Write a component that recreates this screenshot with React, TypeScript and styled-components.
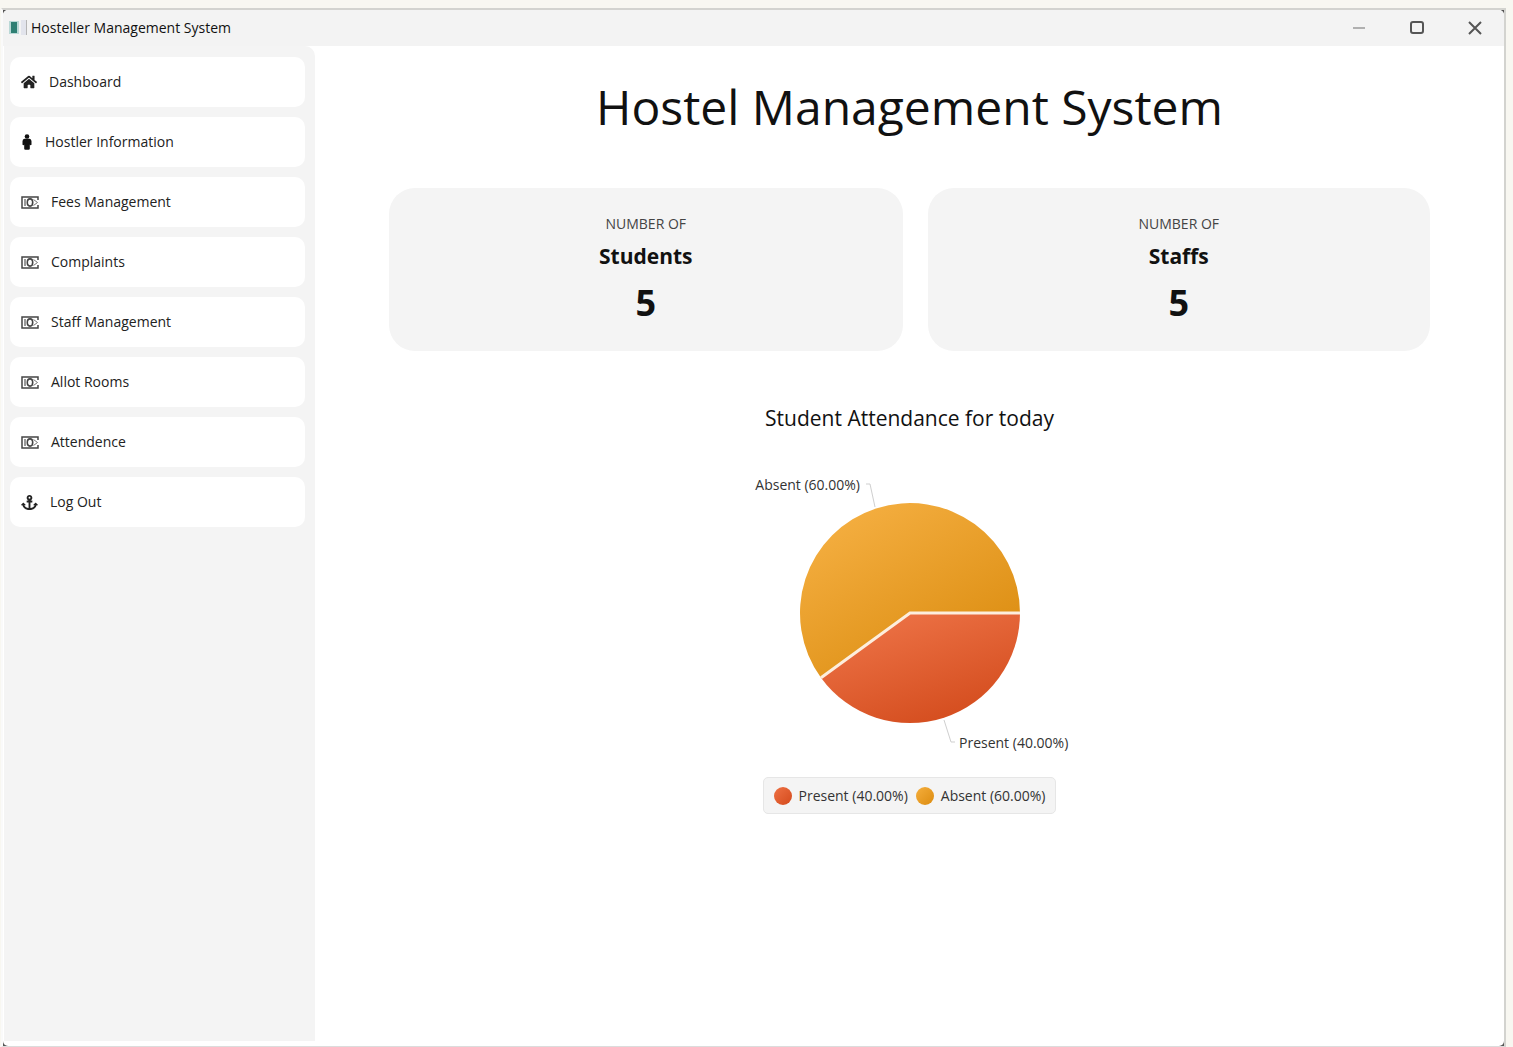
import React from "react";
import styled, { createGlobalStyle } from "styled-components";
import { FaAnchor, FaHome } from "react-icons/fa";

const GlobalStyle = createGlobalStyle`
  * { box-sizing: border-box; }
  html, body, #root { height: 100%; }
  body {
    margin: 0;
    background: #f8f7f1;
    color: #111;
    font-family: "Open Sans", "Noto Sans", sans-serif;
  }
  h1, h2, p, ul { margin: 0; padding: 0; font-weight: 400; }
`;

const Desktop = styled.div`
  min-height: 100%;
  display: flex;
  padding: 8px 7px 0 1px;
`;

const Frame = styled.div`
  flex: 1;
  display: flex;
  background: #555;
  border: 2px solid #d3d3cf;
  border-left-color: #fafafa;
  border-bottom: 1px solid #dcdcdc;
`;

const Window = styled.div`
  flex: 1;
  display: flex;
  flex-direction: column;
  overflow: hidden;
  background: #fff;
  border-radius: 5px;
`;

const TitleBar = styled.header`
  display: flex;
  align-items: center;
  height: 36px;
  padding-left: 6px;
  background: #f3f3f3;
`;

const AppName = styled.p`
  flex: 1;
  margin-left: 4px;
  font-size: 14px;
  line-height: 20px;
`;

const WindowButtons = styled.div`
  display: flex;
`;

const WindowButton = styled.button`
  display: grid;
  place-items: center;
  width: 58px;
  height: 36px;
  padding: 0;
  border: 0;
  background: transparent;
  color: ${(p) => p.color};
`;

const Body = styled.div`
  flex: 1;
  display: flex;
  padding: 0 0 5px 1px;
`;

const Sidebar = styled.nav`
  flex: 0 0 311px;
  padding: 11px 10px 10px 6px;
  background: #f4f4f4;
  border-radius: 0 10px 0 0;
`;

const MenuList = styled.ul`
  display: flex;
  flex-direction: column;
  gap: 10px;
  list-style: none;
`;

const MenuButton = styled.button`
  display: flex;
  align-items: center;
  gap: 12px;
  width: 100%;
  height: 50px;
  padding: 0 11px;
  border: 0;
  border-radius: 10px;
  background: #fff;
  color: #222;
  font: 14px/20px "Open Sans", "Noto Sans", sans-serif;
`;

const Main = styled.main`
  flex: 1;
  display: flex;
  flex-direction: column;
  align-items: center;
  padding: 24px 74px;
`;

const Heading = styled.h1`
  font-size: 48px;
  line-height: 74px;
`;

const Cards = styled.section`
  display: grid;
  grid-template-columns: 513fr 502fr;
  gap: 25px;
  width: 100%;
  margin-top: 44px;
`;

const Card = styled.article`
  display: flex;
  flex-direction: column;
  align-items: center;
  height: 163px;
  padding-top: 26px;
  border-radius: 26px;
  background: #f4f4f4;
`;

const Eyebrow = styled.p`
  color: #444;
  font-size: 14px;
  line-height: 20px;
`;

const CardName = styled.h2`
  margin-top: 8px;
  font-size: 21px;
  font-weight: 700;
  line-height: 28px;
`;

const Count = styled.p`
  margin-top: 8px;
  font-size: 36px;
  font-weight: 700;
  line-height: 50px;
`;

const Chart = styled.section`
  display: flex;
  flex-direction: column;
  align-items: center;
  margin-top: 51px;
`;

const ChartTitle = styled.h2`
  font-size: 21px;
  line-height: 32px;
`;

const Pie = styled.svg`
  display: block;
  width: 340px;
  height: 290px;
  margin-top: 36px;
`;

const SliceLabel = styled.text`
  fill: #333;
  font-size: 14px;
`;

const Legend = styled.ul`
  display: flex;
  align-items: center;
  gap: 8px;
  height: 37px;
  margin-top: 17px;
  padding: 0 10px;
  border: 1px solid #e6e6e6;
  border-radius: 5px;
  background: #f4f4f4;
  list-style: none;
`;

const LegendItem = styled.li`
  display: flex;
  align-items: center;
  gap: 7px;
  color: #333;
  font-size: 14px;
  line-height: 20px;
`;

const Dot = styled.span<{ $from: string; $to: string }>`
  width: 18px;
  height: 18px;
  border-radius: 50%;
  background: linear-gradient(135deg, ${(p) => p.$from}, ${(p) => p.$to});
`;

function PersonIcon() {
  return (
    <svg width="12" height="16" viewBox="0 0 12 16" fill="#111" aria-hidden="true">
      <circle cx="6" cy="2.500" r="2.300" />
      <path d="M3.500 4.800h5q2 .4 2 2.400v3.300q0 .8-.9.8-.7 0-.8-.8v4.300q0 1-1.200 1H4.400q-1.200 0-1.200-1v-4.300q-.1.8-.8.8-.9 0-.9-.8V7.200q0-2 2-2.400Z" />
    </svg>
  );
}

function BanknoteIcon() {
  return (
    <svg width="18" height="13" viewBox="0 0 18 13" fill="none" stroke="#444" aria-hidden="true">
      <path d="M17 4V1H1v11h16V9" strokeWidth="1.500" />
      <path d="M4 3v7" strokeWidth="1.500" stroke="#777" />
      <ellipse cx="9" cy="6.500" rx="2.700" ry="3.600" strokeWidth="1.600" />
      <path d="M12.500 3.500l4 3-4 3" stroke="#777" />
    </svg>
  );
}

const menu = [
  { label: "Dashboard", icon: <FaHome size={16} /> },
  { label: "Hostler Information", icon: <PersonIcon /> },
  { label: "Fees Management", icon: <BanknoteIcon /> },
  { label: "Complaints", icon: <BanknoteIcon /> },
  { label: "Staff Management", icon: <BanknoteIcon /> },
  { label: "Allot Rooms", icon: <BanknoteIcon /> },
  { label: "Attendence", icon: <BanknoteIcon /> },
  { label: "Log Out", icon: <FaAnchor size={17} /> },
];

const stats = [
  { name: "Students", count: 5 },
  { name: "Staffs", count: 5 },
];

const slices = [
  { label: "Present (40.00%)", from: "#ee7144", to: "#d44a1c" },
  { label: "Absent (60.00%)", from: "#f5ae3c", to: "#dc8c10" },
];

function AppIcon() {
  return (
    <svg width="18" height="16" viewBox="0 0 18 16" aria-hidden="true">
      <rect x="0" y="1" width="10" height="13" fill="#b9d8d6" />
      <rect x="2" y="2" width="6" height="11" fill="#2e7f73" />
      <rect x="12" y="0" width="5" height="15" fill="#e2e4ec" />
      <path d="M17.500 0v15" stroke="#b5b5b5" />
    </svg>
  );
}

function AttendancePie() {
  return (
    <Pie viewBox="0 0 340 290" role="img" aria-label="Student attendance">
      <defs>
        <linearGradient id="absent" x1="0.15" y1="0.1" x2="0.8" y2="1">
          <stop offset="0" stopColor="#f4ae40" />
          <stop offset="1" stopColor="#da8b0e" />
        </linearGradient>
        <linearGradient id="present" x1="0.2" y1="0" x2="0.8" y2="1">
          <stop offset="0" stopColor="#ee7448" />
          <stop offset="1" stopColor="#d24a1b" />
        </linearGradient>
      </defs>
      <path d="M170 143H280A110 110 0 1 0 81 207.700Z" fill="url(#absent)" />
      <path d="M170 143H280A110 110 0 0 1 81 207.700Z" fill="url(#present)" />
      <path d="M280 143H170L81 207.700" fill="none" stroke="#fdeedd" strokeWidth="3" />
      <path d="M126 14h4l5 23M204 250l7 22h4" fill="none" stroke="#cfcfcf" />
      <SliceLabel x="120" y="20" textAnchor="end">Absent (60.00%)</SliceLabel>
      <SliceLabel x="219" y="278">Present (40.00%)</SliceLabel>
    </Pie>
  );
}

export default function App() {
  return (
    <>
      <GlobalStyle />
      <Desktop>
        <Frame>
          <Window>
            <TitleBar>
              <AppIcon />
              <AppName>Hosteller Management System</AppName>
              <WindowButtons>
                <WindowButton aria-label="Minimize" color="#b0b0b0">
                  <svg width="14" height="14"><path d="M1 7h12" stroke="currentColor" strokeWidth="2" /></svg>
                </WindowButton>
                <WindowButton aria-label="Maximize" color="#555">
                  <svg width="16" height="16"><rect x="2" y="2" width="12" height="11" rx="2" fill="none" stroke="currentColor" strokeWidth="2" /></svg>
                </WindowButton>
                <WindowButton aria-label="Close" color="#555">
                  <svg width="14" height="14"><path d="M1 1l12 12M13 1L1 13" stroke="currentColor" strokeWidth="2" /></svg>
                </WindowButton>
              </WindowButtons>
            </TitleBar>
            <Body>
              <Sidebar aria-label="Main menu">
                <MenuList>
                  {menu.map((item) => (
                    <li key={item.label}>
                      <MenuButton>
                        {item.icon}
                        {item.label}
                      </MenuButton>
                    </li>
                  ))}
                </MenuList>
              </Sidebar>
              <Main>
                <Heading>Hostel Management System</Heading>
                <Cards>
                  {stats.map((stat) => (
                    <Card key={stat.name}>
                      <Eyebrow>NUMBER OF</Eyebrow>
                      <CardName>{stat.name}</CardName>
                      <Count>{stat.count}</Count>
                    </Card>
                  ))}
                </Cards>
                <Chart>
                  <ChartTitle>Student Attendance for today</ChartTitle>
                  <AttendancePie />
                  <Legend>
                    {slices.map((slice) => (
                      <LegendItem key={slice.label}>
                        <Dot $from={slice.from} $to={slice.to} />
                        {slice.label}
                      </LegendItem>
                    ))}
                  </Legend>
                </Chart>
              </Main>
            </Body>
          </Window>
        </Frame>
      </Desktop>
    </>
  );
}
